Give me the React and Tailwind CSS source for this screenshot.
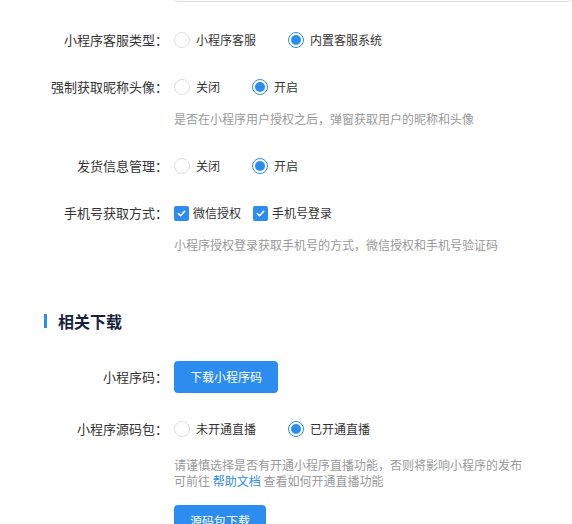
import React, { useState } from 'react';

const Radio = ({ checked, label, onClick }) => (
  <label className="flex items-center cursor-pointer" onClick={onClick}>
    <span className={`w-4 h-4 rounded-full border bg-white flex items-center justify-center ${checked ? 'border-[#2d8cf0]' : 'border-[#dcdee2]'}`}>
      {checked && <span className="w-[10px] h-[10px] rounded-full bg-[#2d8cf0]" />}
    </span>
    <span className="ml-[6px]">{label}</span>
  </label>
);

const Checkbox = ({ checked, label, onClick }) => (
  <label className="flex items-center cursor-pointer" onClick={onClick}>
    <span className={`w-[15px] h-[15px] rounded-[2px] flex items-center justify-center ${checked ? 'bg-[#2d8cf0]' : 'border border-[#dcdee2] bg-white'}`}>
      {checked && (
        <svg width="9" height="9" viewBox="0 0 10 10" fill="none">
          <path d="M1.5 5.2 L4 7.5 L8.5 2.5" stroke="#fff" strokeWidth="1.8" strokeLinecap="round" strokeLinejoin="round" />
        </svg>
      )}
    </span>
    <span className="ml-1">{label}</span>
  </label>
);

const FormItem = ({ label, children, className = '' }) => (
  <div className={`flex items-center h-8 ${className}`}>
    <div className="w-[174px] pr-[6px] text-right text-[13px] text-[#333]">{label}</div>
    <div className="flex items-center text-xs text-[#333]">{children}</div>
  </div>
);

const RadioGroup = ({ options, value, onChange }) => (
  <div className="flex items-center gap-8">
    {options.map((o, i) => (
      <Radio key={o} label={o} checked={value === i} onClick={() => onChange(i)} />
    ))}
  </div>
);

const Help = ({ children }) => (
  <div className="ml-[174px] h-8 leading-8 text-xs text-[#999]">{children}</div>
);

export default function App() {
  const [service, setService] = useState(1);
  const [avatar, setAvatar] = useState(1);
  const [ship, setShip] = useState(1);
  const [wx, setWx] = useState(true);
  const [phone, setPhone] = useState(true);
  const [live, setLive] = useState(1);

  return (
    <div className="w-[572px] h-[524px] overflow-hidden bg-white font-['Noto_Sans_CJK_SC','Noto_Sans',sans-serif]">
      <div className="ml-[174px] -mt-[30px] h-8 border border-[#dcdee2] rounded" />

      <FormItem label="小程序客服类型：" className="mt-[22px]">
        <RadioGroup options={['小程序客服', '内置客服系统']} value={service} onChange={setService} />
      </FormItem>

      <FormItem label="强制获取昵称头像：" className="mt-[15px]">
        <RadioGroup options={['关闭', '开启']} value={avatar} onChange={setAvatar} />
      </FormItem>
      <Help>是否在小程序用户授权之后，弹窗获取用户的昵称和头像</Help>

      <FormItem label="发货信息管理：" className="mt-[15px]">
        <RadioGroup options={['关闭', '开启']} value={ship} onChange={setShip} />
      </FormItem>

      <FormItem label="手机号获取方式：" className="mt-[15px]">
        <div className="flex items-center gap-3">
          <Checkbox label="微信授权" checked={wx} onClick={() => setWx(!wx)} />
          <Checkbox label="手机号登录" checked={phone} onClick={() => setPhone(!phone)} />
        </div>
      </FormItem>
      <Help>小程序授权登录获取手机号的方式，微信授权和手机号验证码</Help>

      <div className="flex items-center h-6 mt-12 pl-[44px]">
        <span className="w-[3px] h-[14px] bg-[#2d8cf0]" />
        <h3 className="ml-[11px] text-base font-bold text-[#17233d]">相关下载</h3>
      </div>

      <FormItem label="小程序码：" className="mt-7">
        <button className="h-8 px-4 rounded bg-[#2d8cf0] text-white text-xs">下载小程序码</button>
      </FormItem>

      <FormItem label="小程序源码包：" className="mt-5">
        <RadioGroup options={['未开通直播', '已开通直播']} value={live} onChange={setLive} />
      </FormItem>
      <div className="ml-[174px] mt-3 text-xs leading-4 text-[#999]">
        <p>请谨慎选择是否有开通小程序直播功能，否则将影响小程序的发布</p>
        <p>
          可前往 <a className="text-[#2d8cf0] cursor-pointer">帮助文档</a> 查看如何开通直播功能
        </p>
      </div>
      <div className="ml-[174px] mt-4">
        <button className="h-8 px-4 rounded bg-[#2d8cf0] text-white text-xs">源码包下载</button>
      </div>
    </div>
  );
}
